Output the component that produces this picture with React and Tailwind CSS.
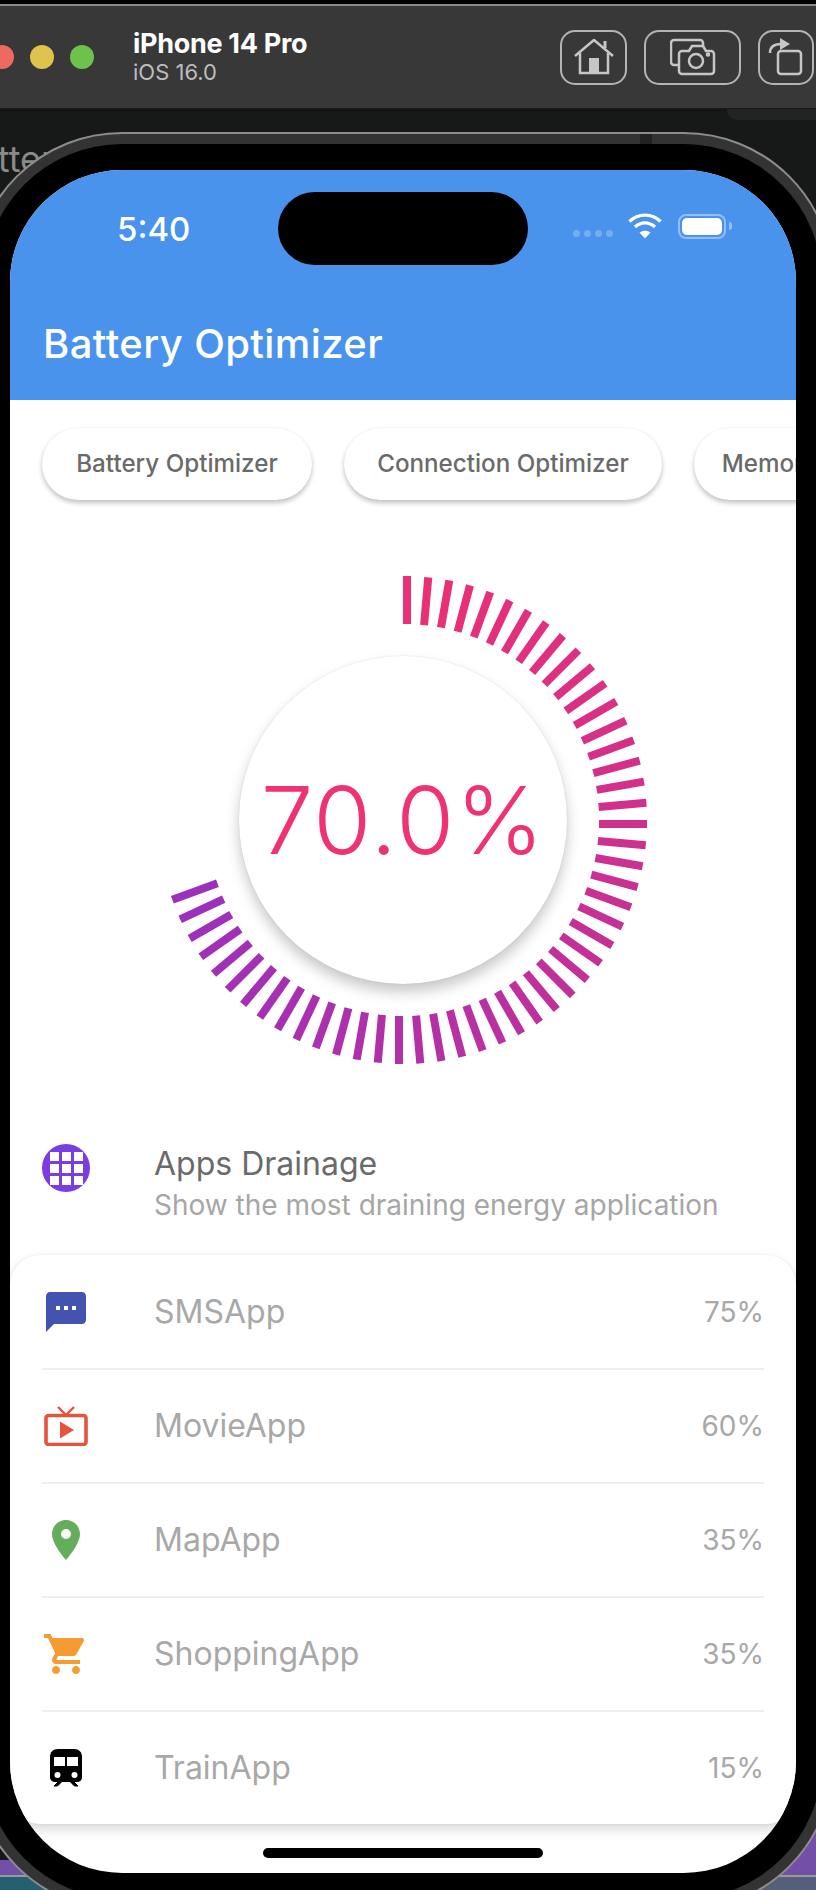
import React from "react";
import { MdSms, MdLocationOn, MdShoppingCart } from "react-icons/md";

const ticks = Array.from({ length: 51 }, (_, i) => {
  const t = i / 50;
  const r = Math.round(236 + (155 - 236) * t);
  const g = 48;
  const b = Math.round(116 + (188 - 116) * t);
  return { angle: i * 5, color: `rgb(${r},${g},${b})` };
});

function Gauge() {
  return (
    <div className="relative mx-auto mt-[62px] h-[500px] w-[500px]">
      <svg width="500" height="500" viewBox="-250 -250 500 500" className="block">
        {ticks.map((t) => (
          <rect key={t.angle} x="0" y="-244" width="8" height="48" fill={t.color} transform={`rotate(${t.angle})`} />
        ))}
      </svg>
      <div className="absolute left-[86px] top-[86px] flex h-[328px] w-[328px] items-center justify-center rounded-full bg-white shadow-[0_8px_14px_rgba(0,0,0,0.22),0_0_2px_rgba(0,0,0,0.1)]">
        <span className="text-[94px] font-light leading-none tracking-[1.5px] text-[#EE3272] [font-family:Inter,sans-serif]">70.0%</span>
      </div>
    </div>
  );
}

function TvIcon() {
  return (
    <svg width="44" height="40" viewBox="0 0 44 40">
      <path d="M14 1l8 8 8-8" fill="none" stroke="#E5533D" strokeWidth="2.4" />
      <rect x="2" y="9.5" width="40" height="29" rx="2.5" fill="none" stroke="#E5533D" strokeWidth="3.6" />
      <path d="M16 15.5v17l14-8.5z" fill="#E5533D" />
    </svg>
  );
}

function TrainIcon() {
  return (
    <svg width="32" height="38" viewBox="0 0 32 38">
      <path d="M8 0h16c5 0 8 3 8 8v20c0 3-2 5-5 5H5c-3 0-5-2-5-5V8c0-5 3-8 8-8z" fill="#000" />
      <path d="M9 32l-5 5h3.500l5-5zM23 32l5 5h-3.500l-5-5z" fill="#000" stroke="#000" />
      <rect x="4" y="8" width="11" height="9" fill="#fff" />
      <rect x="17" y="8" width="11" height="9" fill="#fff" />
      <circle cx="7.500" cy="26" r="3" fill="#fff" />
      <circle cx="24.500" cy="26" r="3" fill="#fff" />
    </svg>
  );
}

function GridIcon() {
  const cells = Array.from({ length: 9 });
  return (
    <div className="flex h-12 w-12 shrink-0 items-center justify-center rounded-full bg-[#7A3EE0]">
      <div className="grid grid-cols-3 gap-[3px]">
        {cells.map((_, i) => (
          <div key={i} className="h-[9px] w-[9px] bg-white" />
        ))}
      </div>
    </div>
  );
}

const apps = [
  { name: "SMSApp", pct: "75%", icon: <MdSms size={48} color="#4353AF" /> },
  { name: "MovieApp", pct: "60%", icon: <TvIcon /> },
  { name: "MapApp", pct: "35%", icon: <MdLocationOn size={48} color="#62AE5A" /> },
  { name: "ShoppingApp", pct: "35%", icon: <MdShoppingCart size={48} color="#F59B32" /> },
  { name: "TrainApp", pct: "15%", icon: <TrainIcon /> },
];

const chips = [
  { label: "Battery Optimizer", width: "w-[270px]" },
  { label: "Connection Optimizer", width: "w-[318px]" },
  { label: "Memory Optimizer", width: "w-[270px]" },
];

function ToolbarButton({ width, children }) {
  return (
    <div className={`flex h-[55px] items-center justify-center rounded-[15px] border-2 border-[#b4b4b4] ${width}`}>
      {children}
    </div>
  );
}

export default function App() {
  return (
    <div className="relative h-[1890px] w-[816px] overflow-hidden bg-[#171818] [font-family:Inter,sans-serif]">
      {/* desktop behind the simulator */}
      <div className="absolute left-0 top-[110px] h-[1px] w-full bg-[#111]" />
      <div className="absolute right-0 top-[109px] h-[11px] w-[89px] rounded-bl-[10px] bg-[#222323]" />
      <div className="absolute left-[-46px] top-[132px] text-[36px] text-[#8a8a8a]">Battery</div>
      <div className="absolute bottom-0 left-0 h-[30px] w-[816px] bg-[#26606e]" />
      <div className="absolute bottom-[15px] left-0 h-[15px] w-[816px] bg-[#7350A8]" />
      <div className="absolute bottom-[13px] left-0 h-[2px] w-[816px] bg-[#999]" />
      <div className="absolute bottom-0 right-0 h-[13px] w-[60px] bg-[#54607a]" />
      <div className="absolute bottom-[15px] right-0 h-[45px] w-[40px] bg-[#7350A8]" />

      {/* simulator toolbar */}
      <div className="relative h-[4px] bg-black" />
      <div className="relative h-[2px] bg-[#8c8c8c]" />
      <div className="relative flex h-[102px] items-center bg-[#383838] pr-[2px]">
        <div className="ml-[-10px] flex gap-[16px]">
          <div className="h-[24px] w-[24px] rounded-full bg-[#ED6A5E]" />
          <div className="h-[24px] w-[24px] rounded-full bg-[#E0C34C]" />
          <div className="h-[24px] w-[24px] rounded-full bg-[#6CC24A]" />
        </div>
        <div className="ml-[39px] mt-[-2px] flex flex-col">
          <span className="text-[27px] font-bold leading-[31px] tracking-[-0.3px] text-white [font-family:Inter,sans-serif]">iPhone 14 Pro</span>
          <span className="text-[22px] leading-[26px] text-[#bdbdbd]">iOS 16.0</span>
        </div>
        <div className="ml-auto flex items-center gap-[17px]">
          <ToolbarButton width="w-[67px]">
            <svg width="42" height="38" viewBox="0 0 42 38" fill="none" stroke="#c6c6c6" strokeWidth="2.500">
              <path d="M2 18L21 2l19 16" strokeLinejoin="round" />
              <path d="M32 10V3" strokeWidth="3" />
              <path d="M7 15v20h28V15" />
              <rect x="16" y="20" width="10" height="15" fill="#c6c6c6" stroke="none" />
            </svg>
          </ToolbarButton>
          <ToolbarButton width="w-[97px]">
            <svg width="46" height="38" viewBox="0 0 46 38" fill="none" stroke="#c6c6c6" strokeWidth="2.500">
              <path d="M8 27H4a3 3 0 0 1-3-3V5a3 3 0 0 1 3-3h26a3 3 0 0 1 3 3v4" />
              <path d="M12 13h7l3-5h11l3 5h5a3 3 0 0 1 3 3v17a3 3 0 0 1-3 3H12a3 3 0 0 1-3-3V16a3 3 0 0 1 3-3z" fill="#383838" />
              <circle cx="26" cy="23" r="7" />
              <circle cx="38" cy="16.500" r="1" fill="#c6c6c6" />
            </svg>
          </ToolbarButton>
          <ToolbarButton width="w-[56px]">
            <svg width="36" height="38" viewBox="0 0 36 38" fill="none" stroke="#c6c6c6" strokeWidth="2.500">
              <rect x="10" y="13" width="23" height="23" rx="3" />
              <path d="M2 15c0-6 4-9 11-9" />
              <path d="M12 0l10 6-10 6z" fill="#c6c6c6" stroke="none" />
            </svg>
          </ToolbarButton>
        </div>
      </div>

      {/* phone */}
      <div className="relative ml-[-28px] mt-[24px] h-[1779px] w-[862px] rounded-[150px] border-2 border-[#8c8c8c] bg-[#333333] p-[10px]">
        <div className="absolute left-[666px] top-0 h-[10px] w-[12px] bg-[#222222]" />
        <div className="h-full w-full rounded-[138px] bg-black p-[26px]">
          <div className="h-[1703px] w-[786px] overflow-hidden rounded-[112px] bg-white">
            {/* app bar */}
            <div className="h-[230px] bg-[#4993ED]">
              <div className="flex items-center pl-[107px] pt-[22px]">
                <span className="w-[161px] text-[33px] font-medium leading-[72px] text-white">5:40</span>
                <div className="h-[73px] w-[250px] rounded-full bg-black" />
                <div className="ml-[45px] flex gap-[4px] pt-[9px]">
                  <div className="h-[7px] w-[7px] rounded-full bg-[#74AEF0]" />
                  <div className="h-[7px] w-[7px] rounded-full bg-[#74AEF0]" />
                  <div className="h-[7px] w-[7px] rounded-full bg-[#74AEF0]" />
                  <div className="h-[7px] w-[7px] rounded-full bg-[#74AEF0]" />
                </div>
                <svg width="34" height="26" viewBox="0 0 34 26" className="ml-[15px] mb-[5px]" fill="none" stroke="#fff" strokeWidth="3.400">
                  <path d="M1.500 8.500C10 0 24 0 32.500 8.500" />
                  <path d="M7 14c6-5.500 14-5.500 20 0" />
                  <path d="M17 25.500l-5.500-6c3.500-2.500 7.500-2.500 11 0z" fill="#fff" stroke="none" />
                </svg>
                <div className="ml-[16px] mb-[5px] flex items-center">
                  <div className="h-[25px] w-[48px] rounded-[8px] border-2 border-[#92BEF3] p-[2px]">
                    <div className="h-full w-full rounded-[5px] bg-white" />
                  </div>
                  <div className="ml-[3px] h-[8px] w-[3px] rounded-r-full bg-[#92BEF3]" />
                </div>
              </div>
              <div className="pl-[33px] pt-[55px] text-[40px] font-medium leading-[48px] tracking-[0.4px] text-white">
                Battery Optimizer
              </div>
            </div>

            {/* chips */}
            <div className="flex gap-[32px] overflow-hidden pb-[8px] pl-[32px] pt-[28px]">
              {chips.map((c) => (
                <div
                  key={c.label}
                  className={`flex h-[72px] shrink-0 items-center justify-center rounded-full bg-white text-[24.2px] font-medium text-[#6a6a6a] shadow-[0_3px_5px_rgba(0,0,0,0.24),0_0_1px_rgba(0,0,0,0.08)] ${c.width}`}
                >
                  {c.label}
                </div>
              ))}
            </div>

            <Gauge />

            {/* list header */}
            <div className="flex h-[185px] pl-[32px] pt-[74px]">
              <GridIcon />
              <div className="ml-[64px]">
                <div className="text-[32px] leading-[40px] text-[#6a6a6a]">Apps Drainage</div>
                <div className="mt-[3px] text-[28px] leading-[36px] text-[#a6a6a6]">Show the most draining energy application</div>
              </div>
            </div>

            {/* card */}
            <div className="rounded-[30px] bg-white px-[32px] pt-[1px] shadow-[0_5px_12px_rgba(0,0,0,0.16),0_0_2px_rgba(0,0,0,0.08)]">
              {apps.map((a, i) => (
                <div key={a.name} className={`flex items-center ${i < 4 ? "h-[114px] border-b-2 border-[#eeeeee]" : "h-[112px]"}`}>
                  <div className="flex w-[48px] justify-center">{a.icon}</div>
                  <span className="ml-[64px] text-[32px] text-[#a8a8a8]">{a.name}</span>
                  <span className="ml-auto text-[28px] text-[#a8a8a8]">{a.pct}</span>
                </div>
              ))}
            </div>

            <div className="mx-auto mt-[24px] h-[10px] w-[280px] rounded-full bg-black" />
          </div>
        </div>
      </div>
    </div>
  );
}
